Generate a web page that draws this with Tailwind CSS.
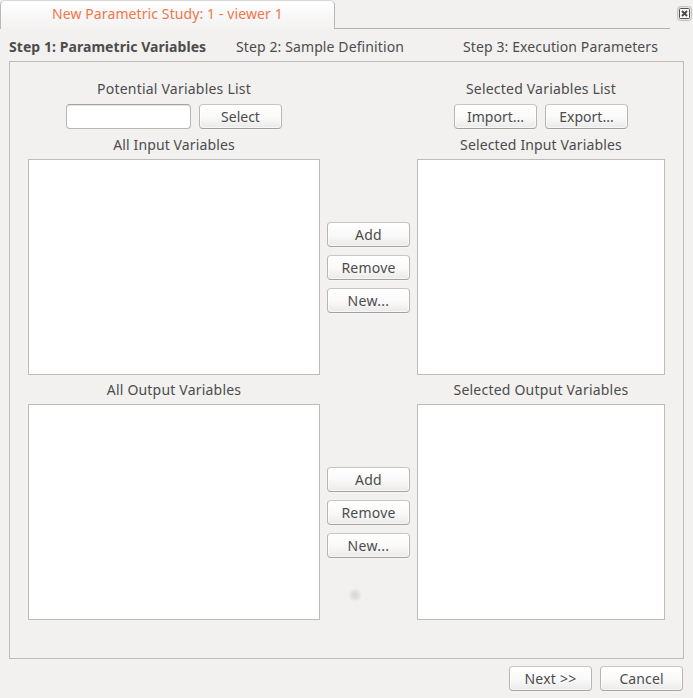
<!DOCTYPE html>
<html lang="en">
<head>
<meta charset="utf-8">
<title>New Parametric Study</title>
<script src="https://cdn.jsdelivr.net/npm/@tailwindcss/browser@4"></script>
<style>
.btn{width:83px;height:25px;flex:none;border:1px solid;border-color:#c9c6c2 #b9b6b1 #a5a29d;border-radius:4px;background:linear-gradient(#fff,#fafafa 50%,#ebeae9);box-shadow:inset 0 0 0 1px rgba(255,255,255,.6),0 1px 0 rgba(255,255,255,.4);display:flex;align-items:center;justify-content:center;padding-top:1px}
</style>
</head>
<body class="w-[693px] h-[698px] overflow-hidden bg-[#f2f1f0] text-[#4c4c4c] text-[14px] leading-5 whitespace-nowrap" style="font-family:'Noto Sans','Open Sans',sans-serif">
<div class="relative flex flex-col h-full">
  <header class="flex h-[29px]">
    <div class="w-[335px] h-[29px] border-x border-t border-[#bbb8b4] border-t-[#d8d6d3] rounded-t-[5px] bg-linear-to-b from-white to-[#f3f2f1] pl-[51px] pt-[3px] text-[#f0764a]"><span class="tracking-[0.1px]">New Parametric Study: 1 - viewer 1</span></div>
    <div class="w-[335px] border-b border-[#b5b2ae]"></div>
    <svg class="ml-[7px] mt-[6px]" width="15" height="15" viewBox="0 0 15 15"><rect x=".5" y=".5" width="14" height="14" rx="3" fill="#e5e4e2" stroke="#c4c2be"/><rect x="2.5" y="2.5" width="10" height="10" rx="1" fill="#fafafa" stroke="#555"/><path d="M5 5l5 5M10 5l-5 5" stroke="#4c4c4c" stroke-width="2"/></svg>
  </header>
  <nav class="flex h-8 pl-[9px] pt-2">
    <div class="w-[227px] font-bold"><span class="tracking-[0.06px]">Step 1: Parametric Variables</span></div>
    <div class="w-[227px]"><span class="tracking-[0.11px]">Step 2: Sample Definition</span></div>
    <div><span class="tracking-[0.11px]">Step 3: Execution Parameters</span></div>
  </nav>
  <main class="ml-[9px] w-[675px] h-[598px] border border-[#bfbcb8] pl-[18px] flex gap-[7px]">
    <section class="w-[292px] pt-[17px] flex flex-col items-center">
      <div class="h-5"><span class="tracking-[0.22px]">Potential Variables List</span></div>
      <div class="flex gap-2 mt-[5px]">
        <input aria-label="Variable filter" class="w-[125px] h-[25px] bg-white border border-[#b9b6b1] border-t-[#a5a29d] rounded-[4px] shadow-[inset_0_1px_1px_#e4e3e1]">
        <button class="btn"><span>Select</span></button>
      </div>
      <div class="h-5 mt-1.5"><span class="tracking-[0.12px]">All Input Variables</span></div>
      <div class="w-full h-[216px] mt-1 bg-white border border-[#bfbcb8]"></div>
      <div class="h-5 mt-[5px]"><span class="tracking-[0.2px]">All Output Variables</span></div>
      <div class="w-full h-[216px] mt-1 bg-white border border-[#bfbcb8]"></div>
    </section>
    <section class="w-[83px] pt-[160px] flex flex-col gap-2">
      <button class="btn"><span class="tracking-[0.2px]">Add</span></button>
      <button class="btn"><span class="tracking-[0.2px]">Remove</span></button>
      <button class="btn"><span class="tracking-[0.3px]">New...</span></button>
      <button class="btn mt-[146px]"><span class="tracking-[0.2px]">Add</span></button>
      <button class="btn"><span class="tracking-[0.2px]">Remove</span></button>
      <button class="btn"><span class="tracking-[0.3px]">New...</span></button>
    </section>
    <section class="w-[248px] pt-[17px] flex flex-col items-center">
      <div class="h-5"><span class="tracking-[0.2px]">Selected Variables List</span></div>
      <div class="flex gap-2 mt-[5px]">
        <button class="btn"><span>Import...</span></button>
        <button class="btn"><span>Export...</span></button>
      </div>
      <div class="h-5 mt-1.5"><span class="tracking-[0.14px]">Selected Input Variables</span></div>
      <div class="w-full h-[216px] mt-1 bg-white border border-[#bfbcb8]"></div>
      <div class="h-5 mt-[5px]"><span class="tracking-[0.21px]">Selected Output Variables</span></div>
      <div class="w-full h-[216px] mt-1 bg-white border border-[#bfbcb8]"></div>
    </section>
  </main>
  <footer class="flex gap-2 justify-end pr-[10px] pt-[7px]">
    <button class="btn"><span class="tracking-[0.25px]">Next &gt;&gt;</span></button>
    <button class="btn"><span class="tracking-[0.1px]">Cancel</span></button>
  </footer>
  <div class="absolute left-[348px] top-[588px] size-[14px] rounded-full bg-[radial-gradient(circle,#d6d5d4_0%,#dfdedd_30%,#f2f1f000_70%)]"></div>
</div>
</body>
</html>
